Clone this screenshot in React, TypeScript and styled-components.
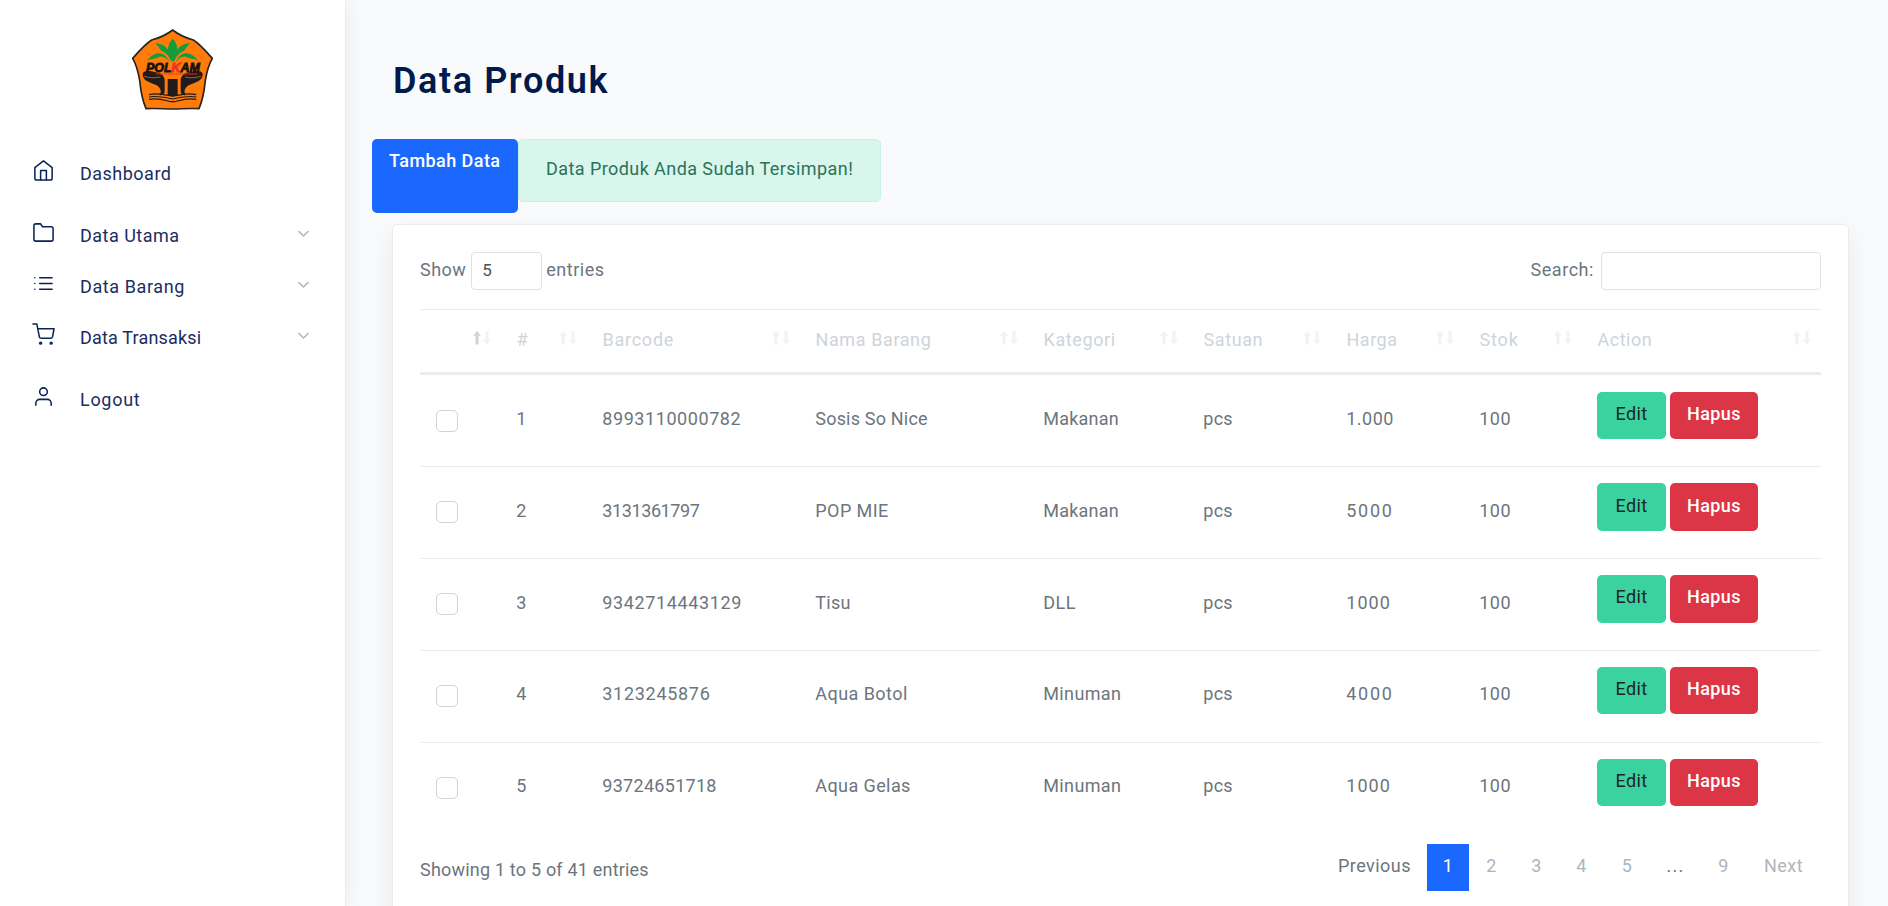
import React from 'react';
import styled, { createGlobalStyle, css } from 'styled-components';

const GlobalStyle = createGlobalStyle`
  *, *::before, *::after { box-sizing: border-box; }
  html, body { margin: 0; padding: 0; height: 100%; overflow: hidden; }
  body {
    background: #f9fafc;
    color: #6c757d;
    font-family: Roboto, "Open Sans", sans-serif;
    font-size: 18px;
    line-height: 24px;
    letter-spacing: 0.45px;
  }
`;

const Page = styled.div`
  display: flex;
  height: 906px;
  overflow: hidden;
`;

/* Text whose tracking differs from the page default */
const Text = styled.span<{ $track?: number }>`
  white-space: pre;
  letter-spacing: ${(p) => p.$track ?? 0.45}px;
`;

/* ---------- Sidebar ---------- */

const Sidebar = styled.aside`
  flex: 0 0 346px;
  background: #fff;
  border-right: 1px solid #e9ecef;
  box-shadow: 3px 0 20px rgba(1, 4, 19, 0.05);
`;

const Brand = styled.div`
  display: flex;
  justify-content: center;
  padding: 26px 2px 0 0;
  height: 148px;
`;

const NavGroup = styled.nav`
  margin-bottom: 11px;
`;

const NavItem = styled.a`
  display: flex;
  align-items: flex-start;
  height: 51px;
  padding: 14px 36px 0 32px;
  color: #1a2d62;
  text-decoration: none;
`;

const NavIcon = styled.svg`
  width: 23px;
  height: 23px;
  margin: -3.5px 25px 0 0;
  fill: none;
  stroke: #0c2358;
  stroke-width: 1.6;
  stroke-linecap: round;
  stroke-linejoin: round;
`;

const Chevron = styled.svg`
  width: 11px;
  height: 8px;
  margin: 6px 0 0 auto;
  fill: none;
  stroke: #b0b7bf;
  stroke-width: 1.6;
  stroke-linecap: round;
  stroke-linejoin: round;
`;

/* ---------- Main ---------- */

const Main = styled.main`
  flex: 1;
  padding: 59px 39px 0 46px;
`;

const Title = styled.h1`
  margin: 0 0 36px 1px;
  color: #001a4e;
  font-size: 36px;
  font-weight: 600;
  line-height: 44px;
  letter-spacing: 1.6px;
`;

const Actions = styled.div`
  display: flex;
  align-items: flex-start;
  margin: 0 0 11px -20px;
`;

const AddButton = styled.button`
  width: 146px;
  height: 74px;
  padding: 10px 0 40px 17px;
  border: 0;
  border-radius: 5px;
  background: #1b68ff;
  color: #fff;
  font: inherit;
  font-weight: 500;
  text-align: left;
`;

const Notice = styled.div`
  width: 363px;
  height: 63px;
  padding: 17px 0 0 27px;
  border: 1px solid #c8f2e3;
  border-radius: 5px;
  background: #d8f6ec;
  color: #2b7259;
`;

const Card = styled.section`
  height: 740px;
  padding: 27px 27px 0;
  border: 1px solid #e9ecef;
  border-radius: 5px;
  background: #fff;
  box-shadow: 0 10px 28px rgba(4, 9, 30, 0.065);
`;

const Toolbar = styled.div`
  display: flex;
  justify-content: space-between;
  height: 38px;
  margin-bottom: 19px;
`;

const Field = styled.label`
  display: flex;
  line-height: 36px;
`;

const control = css`
  height: 38px;
  border: 1px solid #dee2e6;
  border-radius: 4px;
  background: #fff;
  color: #495057;
  font: inherit;
  outline: none;
`;

const LengthSelect = styled.select`
  ${control}
  width: 71px;
  margin: 0 4px 0 5px;
  padding: 0 0 3px 10px;
  appearance: none;
  font-size: 17px;
  line-height: 34px;
`;

const SearchInput = styled.input`
  ${control}
  width: 220px;
  margin-left: 7px;
  padding: 0 10px;
`;

/* ---------- Table ---------- */

const rowGrid = css`
  display: grid;
  grid-template-columns: 81px 86px 213px 228px 160px 143px 133px 118px 239px;
`;

const HeadRow = styled.div`
  ${rowGrid}
  height: 65.5px;
  border-top: 1px solid #e9ecef;
  border-bottom: 3px solid #e9ecef;
`;

const HeadCell = styled.div`
  display: flex;
  justify-content: space-between;
  padding: 18px 10px 0 15.5px;
  color: #ced4da;
`;

const SortIcon = styled.svg`
  width: 18px;
  height: 14px;
  margin: 3px 0 0 auto;
`;

const BodyRow = styled.div`
  ${rowGrid}
  height: 91.75px;
  border-top: 1px solid #e9ecef;
  &:first-of-type { border-top-color: transparent; }
`;

const Cell = styled.div`
  padding: 31.5px 15px 0 15.3px;
`;

const CheckCell = styled.div`
  padding: 34px 16px 0;
`;

const Checkbox = styled.input`
  display: block;
  width: 22px;
  height: 22px;
  margin: 0;
  appearance: none;
  border: 1px solid #ced4da;
  border-radius: 5px;
  background: #fff;
`;

const ActionCell = styled.div`
  display: flex;
  align-items: flex-start;
  gap: 4px;
  padding: 16.15px 0 0 15px;
`;

const ActionButton = styled.button<{ $kind: 'edit' | 'delete' }>`
  width: ${(p) => (p.$kind === 'edit' ? 69 : 88)}px;
  height: 47.4px;
  padding: 0 0 3px;
  border: 0;
  border-radius: 5px;
  background: ${(p) => (p.$kind === 'edit' ? '#3ad29f' : '#dc3545')};
  color: ${(p) => (p.$kind === 'edit' ? '#212529' : '#fff')};
  font: inherit;
  font-weight: ${(p) => (p.$kind === 'edit' ? 400 : 500)};
  letter-spacing: 0.4px;
`;

const Footer = styled.div`
  display: flex;
  justify-content: space-between;
  margin-top: 10.75px;
`;

const Info = styled.div`
  padding-top: 14px;
  letter-spacing: 0.2px;
`;

const Pagination = styled.div`
  display: flex;
`;

const PageLink = styled.a<{ $width: number; $tone?: 'active' | 'muted' }>`
  width: ${(p) => p.$width}px;
  height: 47px;
  padding-top: 10px;
  text-align: center;
  color: ${(p) => (p.$tone === 'active' ? '#fff' : p.$tone === 'muted' ? '#6c757d' : '#adb5bd')};
  background: ${(p) => (p.$tone === 'active' ? '#1b68ff' : 'transparent')};
`;

/* ---------- Data ---------- */

type Label = [text: string, track?: number];

const columns: Label[] = [
  [''], ['#'], ['Barcode', 0.75], ['Nama Barang', 0.6], ['Kategori', 0.6],
  ['Satuan', 0.6], ['Harga', 0.5], ['Stok', 0.85], ['Action', 0.5],
];

const rows: Label[][] = [
  [['1'], ['8993110000782', 0.57], ['Sosis So Nice', 0.19], ['Makanan', 0.2], ['pcs', 0.23], ['1.000', 0.46], ['100']],
  [['2'], ['3131361797', -0.4], ['POP MIE', 0.44], ['Makanan', 0.2], ['pcs', 0.23], ['5000', 1.7], ['100']],
  [['3'], ['9342714443129', 0.62], ['Tisu', 0.3], ['DLL'], ['pcs', 0.23], ['1000', 1], ['100']],
  [['4'], ['3123245876', 0.7], ['Aqua Botol'], ['Minuman', 0.35], ['pcs', 0.23], ['4000', 1.7], ['100']],
  [['5'], ['93724651718', 0.29], ['Aqua Gelas', 0.41], ['Minuman', 0.35], ['pcs', 0.23], ['1000', 1], ['100']],
];

const icons = {
  home: <><path d="M3 9l9-7 9 7v11a2 2 0 0 1-2 2H5a2 2 0 0 1-2-2z" /><path d="M9 22V12h6v10" /></>,
  folder: <path d="M22 19a2 2 0 0 1-2 2H4a2 2 0 0 1-2-2V5a2 2 0 0 1 2-2h5l2 3h9a2 2 0 0 1 2 2z" />,
  list: <path d="M8 6h13M8 12h13M8 18h13M3 6h.01M3 12h.01M3 18h.01" />,
  cart: <><circle cx="9" cy="21" r="1" /><circle cx="20" cy="21" r="1" /><path d="M1 1h4l2.68 13.39a2 2 0 0 0 2 1.61h9.72a2 2 0 0 0 2-1.61L23 6H6" /></>,
  user: <><path d="M20 21v-2a4 4 0 0 0-4-4H8a4 4 0 0 0-4 4v2" /><circle cx="12" cy="7" r="4" /></>,
};

function Nav({ icon, label, track, menu }: { icon: keyof typeof icons; label: string; track: number; menu?: boolean }) {
  return (
    <NavItem>
      <NavIcon viewBox="0 0 24 24" overflow="visible">{icons[icon]}</NavIcon>
      <Text $track={track}>{label}</Text>
      {menu && <Chevron viewBox="0 0 11 8"><path d="M1 1.5l4.5 4.5L10 1.5" /></Chevron>}
    </NavItem>
  );
}

function Sort({ active }: { active?: boolean }) {
  return (
    <SortIcon viewBox="0 0 18 14">
      <path d="M4 0L8 4.8H5.5V13.5H2.5V4.8H0z" fill={active ? '#ced4da' : '#f0f2f4'} />
      <path d="M14 13.5L18 8.7H15.5V0H12.5V8.7H10z" fill="#f0f2f4" />
    </SortIcon>
  );
}

function Logo() {
  return (
    <svg width="84" height="86" viewBox="0 0 252 258">
      <path
        d="M128 12C146 26 168 36 190 42C212 56 230 78 247 97C236 116 230 139 226 163C223 195 218 222 207 248C180 246 154 249 128 249C101 249 76 246 48 248C37 222 32 195 29 163C25 139 19 116 8 97C25 78 43 56 65 42C87 36 110 26 128 12z"
        fill="#ff7c0a" stroke="#2a2320" strokeWidth="5" strokeLinejoin="round"
      />
      <g fill="#159a3c">
        <path d="M128 38C110 54 110 82 125 106H131C146 82 146 54 128 38z" />
        <path d="M124 106C121 72 106 52 75 52C84 58 88 67 94 75C108 79 117 90 124 106z" />
        <path d="M132 106C135 72 150 52 181 52C172 58 168 67 162 75C148 79 139 90 132 106z" />
        <path d="M118 107C106 78 78 70 51 104C68 96 77 99 88 92C101 90 110 97 118 107z" />
        <path d="M138 107C150 78 178 70 205 104C188 96 179 99 168 92C155 90 146 97 138 107z" />
      </g>
      <g fill="#211c1b">
        <path d="M113 159H143V210H113z" />
        <path d="M38 143C43 132 61 135 76 139C92 140 102 148 104 161V196C104 205 96 209 88 207C96 198 93 184 77 176C59 169 37 164 38 143z" />
        <path d="M218 143C213 132 195 135 180 139C164 140 154 148 152 161V196C152 205 160 209 168 207C160 198 163 184 179 176C197 169 219 164 218 143z" />
      </g>
      <path d="M43 151C57 155 72 157 91 153M213 151C199 155 184 157 165 153" stroke="#ff7c0a" strokeWidth="2" fill="none" />
      <path
        d="M57 206C80 201 99 205 128 211C157 205 176 201 199 206M57 213C80 208 99 213 128 219C157 213 176 208 199 213M57 220C82 215 102 222 122 227H134C154 222 174 215 199 220"
        stroke="#211c1b" strokeWidth="3.5" fill="none"
      />
      <text x="48" y="139" fontFamily="Liberation Sans, sans-serif" fontSize="39" fontWeight="700" fontStyle="italic" letterSpacing="0" fill="#17120f" stroke="#17120f" strokeWidth="2.5" textLength="162" lengthAdjust="spacingAndGlyphs">
        POL<tspan fill="#ef3024" stroke="#ef3024">K</tspan>AM
      </text>
      <path d="M78 144H201" stroke="#e8331d" strokeWidth="3" strokeDasharray="5 1" />
    </svg>
  );
}

export default function App() {
  return (
    <>
      <GlobalStyle />
      <Page>
        <Sidebar>
          <Brand><Logo /></Brand>
          <NavGroup><Nav icon="home" label="Dashboard" track={0.49} /></NavGroup>
          <NavGroup>
            <Nav icon="folder" label="Data Utama" track={0.48} menu />
            <Nav icon="list" label="Data Barang" track={0.6} menu />
            <Nav icon="cart" label="Data Transaksi" track={0.17} menu />
          </NavGroup>
          <NavGroup><Nav icon="user" label="Logout" track={0.7} /></NavGroup>
        </Sidebar>
        <Main>
          <Title>Data Produk</Title>
          <Actions>
            <AddButton><Text $track={0.44}>Tambah Data</Text></AddButton>
            <Notice><Text $track={0.43}>Data Produk Anda Sudah Tersimpan!</Text></Notice>
          </Actions>
          <Card>
            <Toolbar>
              <Field>
                <Text>Show</Text>
                <LengthSelect defaultValue="5"><option>5</option></LengthSelect>
                <Text $track={0.54}>entries</Text>
              </Field>
              <Field>
                <Text $track={0.55}>Search:</Text>
                <SearchInput />
              </Field>
            </Toolbar>
            <HeadRow>
              {columns.map(([text, track], i) => (
                <HeadCell key={i}>
                  <Text $track={track}>{text}</Text>
                  <Sort active={i === 0} />
                </HeadCell>
              ))}
            </HeadRow>
            <section>
              {rows.map((row, i) => (
                <BodyRow key={i}>
                  <CheckCell><Checkbox type="checkbox" /></CheckCell>
                  {row.map(([text, track], j) => (
                    <Cell key={j}><Text $track={track}>{text}</Text></Cell>
                  ))}
                  <ActionCell>
                    <ActionButton $kind="edit">Edit</ActionButton>
                    <ActionButton $kind="delete">Hapus</ActionButton>
                  </ActionCell>
                </BodyRow>
              ))}
            </section>
            <Footer>
              <Info>Showing 1 to 5 of 41 entries</Info>
              <Pagination>
                <PageLink $width={105} $tone="muted">Previous</PageLink>
                <PageLink $width={42} $tone="active">1</PageLink>
                <PageLink $width={45}>2</PageLink>
                <PageLink $width={45}>3</PageLink>
                <PageLink $width={45}>4</PageLink>
                <PageLink $width={46}>5</PageLink>
                <PageLink $width={51} $tone="muted"><Text $track={1.2}>...</Text></PageLink>
                <PageLink $width={45}>9</PageLink>
                <PageLink $width={75}>Next</PageLink>
              </Pagination>
            </Footer>
          </Card>
        </Main>
      </Page>
    </>
  );
}
